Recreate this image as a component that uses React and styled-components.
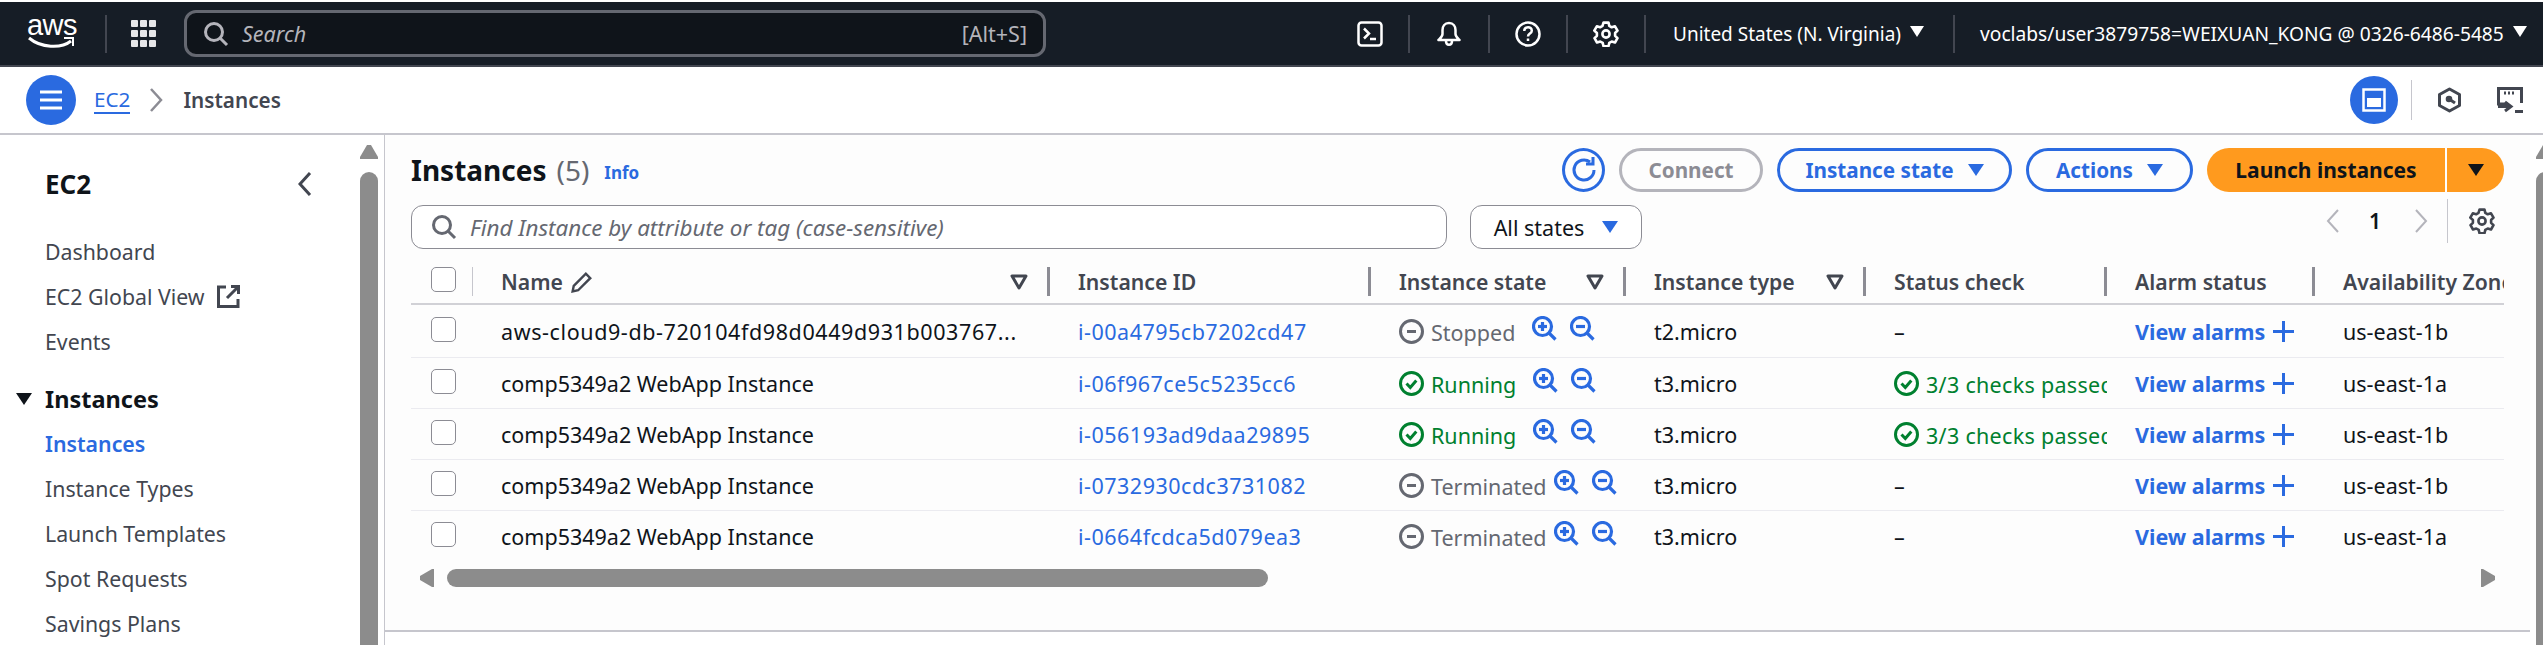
import React from 'react';
import styled, { createGlobalStyle } from 'styled-components';

const BLUE = '#2a6ae0';
const DARK = '#0f141a';
const GREY = '#424650';
const MUTED = '#656871';
const GREEN = '#00802f';
const ORANGE = '#ff9a1e';
const FONT = '"Noto Sans", "Open Sans", Arial, sans-serif';

const GlobalStyle = createGlobalStyle`
    html, body {
        margin: 0;
        padding: 0;
        height: 100%;
        overflow: hidden;
        background: #ffffff;
    }
    body {
        font-family: ${FONT};
        font-size: 21.5px;
        color: ${DARK};
    }
    * {
        box-sizing: border-box;
    }
    svg {
        flex: none;
    }
`;

const Page = styled.div`
    width: 2543px;
    height: 645px;
    overflow: hidden;
    display: flex;
    flex-direction: column;
    padding-top: 2px;
    background: #ffffff;
`;

const TopBar = styled.header`
    height: 65px;
    flex: none;
    display: flex;
    align-items: center;
    background: #161d26;
    border-bottom: 2px solid #424650;
    color: #ffffff;
`;

const LogoBox = styled.div`
    width: 50px;
    margin-left: 27px;
    display: flex;
    flex-direction: column;
    align-items: center;
    color: #ffffff;
`;

const LogoText = styled.span`
    font-family: "Liberation Sans", Arial, sans-serif;
    font-size: 29px;
    line-height: 22px;
    letter-spacing: -0.5px;
    margin-top: -4px;
`;

const TopSep = styled.div`
    width: 2px;
    height: 38px;
    flex: none;
    background: #424650;
    margin-left: ${(p) => p.$left || 0}px;
`;

const GridDots = styled.div`
    display: grid;
    grid-template-columns: repeat(3, 7px);
    grid-auto-rows: 7px;
    gap: 3px 2px;
    margin-left: 24px;
    margin-right: 28px;

    span {
        background: #e6e6e8;
        border-radius: 1px;
    }
`;

const SearchBox = styled.div`
    width: 862px;
    height: 47px;
    flex: none;
    display: flex;
    align-items: center;
    background: #0f141a;
    border: 3px solid #656871;
    border-radius: 12px;
    padding: 0 16px 0 16px;
    color: #b4b4bb;
`;

const SearchHint = styled.span`
    font-style: italic;
    font-size: 21.5px;
    margin-left: 13px;
    flex: 1;
`;

const KeyHint = styled.span`
    font-size: 21.5px;
`;

const TopIcon = styled.div`
    width: ${(p) => p.$width}px;
    flex: none;
    margin-left: ${(p) => p.$left || 0}px;
    margin-right: ${(p) => p.$right || 0}px;
    display: flex;
    justify-content: center;
    color: #ffffff;
`;

const TopText = styled.span`
    font-size: ${(p) => p.$size}px;
    white-space: nowrap;
    margin-left: ${(p) => p.$left}px;
`;

const TopCaret = styled.span`
    width: 0;
    height: 0;
    border-left: 7px solid transparent;
    border-right: 7px solid transparent;
    border-top: 11px solid #ffffff;
    margin-left: ${(p) => p.$left}px;
    margin-bottom: 4px;
`;

const SubBar = styled.div`
    height: 68px;
    flex: none;
    display: flex;
    align-items: center;
    padding-left: 26px;
    border-bottom: 2px solid #c6c6cd;
    background: #ffffff;
`;

const RoundButton = styled.div`
    width: ${(p) => p.$size}px;
    height: ${(p) => p.$size}px;
    border-radius: 50%;
    flex: none;
    background: ${BLUE};
    color: #ffffff;
    display: flex;
    align-items: center;
    justify-content: center;
`;

const Crumb = styled.a`
    margin-left: 18px;
    font-size: 20.7px;
    line-height: 26px;
    color: ${BLUE};
    border-bottom: 2px solid ${BLUE};
`;

const CrumbArrow = styled.svg`
    margin-left: 19px;
`;

const CrumbCurrent = styled.span`
    margin-left: 20px;
    font-size: 20.7px;
    font-weight: 600;
    color: ${GREY};
`;

const SubRight = styled.div`
    margin-left: auto;
    display: flex;
    align-items: center;
    gap: 35px;
    padding-right: 20px;
    color: ${GREY};
`;

const SubLeftGroup = styled.div`
    display: flex;
    align-items: center;
`;

const SubSep = styled.div`
    width: 1px;
    height: 40px;
    background: #c6c6cd;
    margin: 0 25px 0 13px;
`;

const Body = styled.div`
    flex: 1;
    min-height: 0;
    display: flex;
`;

const Sidebar = styled.aside`
    width: 385px;
    flex: none;
    display: flex;
    border-right: 1px solid #c6c6cd;
    background: #ffffff;
`;

const SideNav = styled.nav`
    flex: 1;
    padding-top: 28px;
    padding-left: 45px;
    padding-right: 48px;
`;

const SideHead = styled.div`
    display: flex;
    align-items: center;
    justify-content: space-between;
    height: 42px;
    margin-bottom: 24px;
    font-size: 26px;
    font-weight: 700;
`;

const SideLink = styled.div`
    height: 45px;
    display: flex;
    align-items: center;
    gap: 12px;
    font-size: 21.3px;
    color: ${(p) => (p.$active ? BLUE : GREY)};
    font-weight: ${(p) => (p.$active ? 600 : 400)};
    white-space: nowrap;
`;

const SideGroup = styled.div`
    height: 45px;
    margin-top: 12px;
    margin-left: -29px;
    display: flex;
    align-items: center;
    gap: 13px;
    font-size: 23.5px;
    font-weight: 700;
`;

const GroupCaret = styled.span`
    width: 0;
    height: 0;
    border-left: 8px solid transparent;
    border-right: 8px solid transparent;
    border-top: 12px solid ${DARK};
`;

const VScroll = styled.div`
    width: 18px;
    flex: none;
    margin-left: ${(p) => p.$left || 0}px;
    margin-right: ${(p) => p.$right || 0}px;
    padding-top: 10px;
    display: flex;
    flex-direction: column;
    gap: 13px;
    overflow: hidden;
`;

const VThumb = styled.div`
    flex: 1;
    background: #8c8c8c;
    border-radius: 9px 9px 0 0;
`;

const Main = styled.main`
    flex: 1;
    min-width: 0;
    display: flex;
    align-items: stretch;
`;

const Panel = styled.section`
    width: 2145px;
    height: 497px;
    flex: none;
    padding: 13px 26px 0 26px;
    border-bottom: 2px solid #c6c6cd;
    background: #fdfdfd;
`;

const TitleRow = styled.div`
    height: 44px;
    display: flex;
    align-items: center;
`;

const Title = styled.h1`
    margin: 0;
    font-size: 28px;
    font-weight: 700;
    color: ${DARK};
`;

const Count = styled.span`
    margin-left: 10px;
    font-size: 28px;
    color: ${MUTED};
`;

const InfoLink = styled.a`
    margin-left: 15px;
    margin-top: 4px;
    font-size: 17px;
    font-weight: 700;
    color: ${BLUE};
`;

const Actions = styled.div`
    margin-left: auto;
    display: flex;
    align-items: center;
    gap: 14px;
`;

const RefreshButton = styled.div`
    width: 43px;
    height: 44px;
    border: 3px solid ${BLUE};
    border-radius: 50%;
    color: ${BLUE};
    display: flex;
    align-items: center;
    justify-content: center;
`;

const ActionButton = styled.div`
    width: ${(p) => p.$width}px;
    height: 44px;
    border: 3px solid ${(p) => (p.$disabled ? '#b4b4bb' : BLUE)};
    border-radius: 22px;
    display: flex;
    align-items: center;
    justify-content: center;
    gap: 14px;
    font-size: 20.7px;
    font-weight: 700;
    color: ${(p) => (p.$disabled ? '#8c8c94' : BLUE)};
`;

const BlueCaret = styled.span`
    width: 0;
    height: 0;
    border-left: 8px solid transparent;
    border-right: 8px solid transparent;
    border-top: 12px solid ${BLUE};
`;

const SplitButton = styled.div`
    display: flex;
    height: 44px;
    gap: 2px;
    font-size: 21px;
    font-weight: 700;
    color: ${DARK};
`;

const LaunchMain = styled.div`
    width: 238px;
    background: ${ORANGE};
    border-radius: 22px 0 0 22px;
    display: flex;
    align-items: center;
    justify-content: center;
`;

const LaunchCaret = styled.div`
    width: 57px;
    background: ${ORANGE};
    border-radius: 0 22px 22px 0;
    display: flex;
    align-items: center;
    justify-content: center;

    span {
        width: 0;
        height: 0;
        border-left: 8px solid transparent;
        border-right: 8px solid transparent;
        border-top: 12px solid ${DARK};
    }
`;

const FilterRow = styled.div`
    display: flex;
    align-items: flex-start;
    margin-top: 13px;
    height: 62px;
`;

const FilterInput = styled.div`
    width: 1036px;
    height: 44px;
    display: flex;
    align-items: center;
    gap: 13px;
    padding-left: 19px;
    background: #ffffff;
    border: 1.5px solid #8c8c94;
    border-radius: 12px;
    font-size: 22.4px;
    font-style: italic;
    color: ${MUTED};
`;

const StateSelect = styled.div`
    margin-left: 23px;
    width: 172px;
    height: 44px;
    display: flex;
    align-items: center;
    justify-content: center;
    gap: 18px;
    background: #ffffff;
    border: 1.5px solid #8c8c94;
    border-radius: 12px;
    font-size: 21.5px;
    color: ${DARK};
`;

const Pager = styled.div`
    margin-left: auto;
    margin-top: -6px;
    margin-right: 9px;
    height: 44px;
    display: flex;
    align-items: center;
    font-size: 21px;
    font-weight: 600;
`;

const PagerNum = styled.span`
    margin: 0 33px 0 29px;
`;

const PagerSep = styled.div`
    width: 1px;
    height: 44px;
    background: #c6c6cd;
    margin: 0 21px 0 19px;
`;

const Table = styled.div`
    overflow: hidden;
`;

const COLUMNS = '62px 577px 321px 255px 240px 241px 208px 189px';

const HeadRow = styled.div`
    display: grid;
    grid-template-columns: ${COLUMNS};
    height: 38px;
    align-items: start;
    border-bottom: 2px solid #d1d1d6;
`;

const Row = styled.div`
    display: grid;
    grid-template-columns: ${COLUMNS};
    height: ${(p) => p.$height || 51}px;
    align-items: center;
    border-bottom: ${(p) => (p.$last ? 'none' : '1.5px solid #ebebf0')};
    font-size: 21.5px;
`;

const CheckCell = styled.div`
    height: ${(p) => (p.$head ? '29px' : 'auto')};
    padding-left: 20px;
    border-right: ${(p) => (p.$head ? '1.5px solid #c6c6cd' : 'none')};
    margin-bottom: ${(p) => (p.$head ? 0 : '4px')};
`;

const CheckBox = styled.div`
    width: 25px;
    height: 25px;
    background: #ffffff;
    border: 1.5px solid #8c8c94;
    border-radius: 5px;
`;

const HeadCell = styled.div`
    height: 29px;
    display: flex;
    align-items: center;
    gap: 8px;
    padding-left: 28px;
    padding-right: 19px;
    font-size: 21.2px;
    font-weight: 600;
    color: ${GREY};
    white-space: nowrap;
    overflow: hidden;
    border-right: ${(p) => (p.$last ? 'none' : '3px solid #8c8c94')};
`;

const FilterMark = styled.span`
    margin-left: auto;
    display: flex;
`;

const Cell = styled.div`
    padding-left: 28px;
    white-space: nowrap;
    overflow: hidden;
    color: ${DARK};
    display: flex;
    align-items: center;
    letter-spacing: ${(p) => p.$spacing || 0}px;
`;

const CellLink = styled.a`
    color: ${BLUE};
    letter-spacing: 0.5px;
`;

const StateCell = styled(Cell)`
    gap: 7px;
`;

const StateText = styled.span`
    flex: none;
    color: ${(p) => (p.$ok ? GREEN : MUTED)};
    margin-top: 2px;
`;

const ZoomIcons = styled.span`
    display: flex;
    gap: 13px;
    margin-left: ${(p) => p.$left}px;
    margin-bottom: 6px;
    color: ${BLUE};
`;

const AlarmLink = styled.a`
    display: flex;
    align-items: center;
    gap: 8px;
    color: ${BLUE};
    font-weight: 700;
`;

const HScroll = styled.div`
    height: 18px;
    margin-top: 7px;
    display: flex;
    align-items: center;
    padding: 0 9px;
    color: #8c8c8c;
`;

const HThumb = styled.div`
    width: 821px;
    height: 18px;
    margin-left: 13px;
    margin-right: auto;
    background: #8c8c8c;
    border-radius: 9px;
`;

const Tri = ({ dir }) => (
    <svg width="14" height="18" viewBox="0 0 14 18" fill="currentColor">
        <path d={dir === 'left' ? 'M14 0v18h-2L0 11V7l12-7z' : 'M0 0v18h2l12-7V7L2 0z'} />
    </svg>
);

const FilterCaret = () => (
    <FilterMark>
        <svg width="18" height="16" viewBox="0 0 18 16" fill="none" stroke={GREY} strokeWidth="3" strokeLinejoin="round">
            <path d="M2 2h14L9 14z" />
        </svg>
    </FilterMark>
);

const SearchIcon = ({ size = 26, color = 'currentColor' }) => (
    <svg width={size} height={size} viewBox="0 0 26 26" fill="none" stroke={color} strokeWidth="3">
        <circle cx="11" cy="11" r="8.5" />
        <path d="M17 17l7 7" />
    </svg>
);

const Chevron = ({ dir, color, width = 14, height = 24, stroke = 2 }) => (
    <svg width={width} height={height} viewBox="0 0 14 24" fill="none" stroke={color} strokeWidth={stroke}>
        <path d={dir === 'left' ? 'M12 1L2 12l10 11' : 'M2 1l10 11L2 23'} />
    </svg>
);

const GearIcon = ({ color = 'currentColor', size = 26 }) => (
    <svg width={size} height={size} viewBox="0 0 26 26" fill="none" stroke={color} strokeWidth="2.6" strokeLinejoin="round">
        <circle cx="13" cy="13" r="3.6" />
        <path d="M10.5 1.6h5l.8 3.3 2.4 1.4 3.3-1 2.5 4.3-2.4 2.4v2.8l2.4 2.4-2.5 4.3-3.3-1-2.4 1.4-.8 3.3h-5l-.8-3.3-2.4-1.4-3.3 1-2.5-4.3 2.4-2.4v-2.8L1.3 9.6l2.5-4.3 3.3 1 2.4-1.400z" />
    </svg>
);

const StoppedIcon = () => (
    <svg width="25" height="25" viewBox="0 0 25 25" fill="none" stroke={MUTED} strokeWidth="3">
        <circle cx="12.5" cy="12.5" r="11" />
        <path d="M8 12.5h9" />
    </svg>
);

const OkIcon = () => (
    <svg width="25" height="25" viewBox="0 0 25 25" fill="none" stroke={GREEN} strokeWidth="3">
        <circle cx="12.5" cy="12.5" r="11" />
        <path d="M7.5 12.5l3.8 4 6-7" />
    </svg>
);

const ZoomIcon = ({ plus }) => (
    <svg width="25" height="25" viewBox="0 0 25 25" fill="none" stroke={BLUE} strokeWidth="3.2">
        <circle cx="10.5" cy="10.5" r="9" />
        <path d="M16.5 16.5l7 7" />
        <path d="M6 10.5h9" />
        {plus && <path d="M10.5 6v9" />}
    </svg>
);

const PlusIcon = () => (
    <svg width="21" height="21" viewBox="0 0 21 21" fill="none" stroke={BLUE} strokeWidth="3">
        <path d="M10.5 0v21M0 10.5h21" />
    </svg>
);

const rows = [
    { name: 'aws-cloud9-db-720104fd98d0449d931b003767...', spacing: 0.6, id: 'i-00a4795cb7202cd47', state: 'Stopped', type: 't2.micro', zone: 'us-east-1b' },
    { name: 'comp5349a2 WebApp Instance', id: 'i-06f967ce5c5235cc6', state: 'Running', type: 't3.micro', zone: 'us-east-1a' },
    { name: 'comp5349a2 WebApp Instance', id: 'i-056193ad9daa29895', state: 'Running', type: 't3.micro', zone: 'us-east-1b' },
    { name: 'comp5349a2 WebApp Instance', id: 'i-0732930cdc3731082', state: 'Terminated', type: 't3.micro', zone: 'us-east-1b' },
    { name: 'comp5349a2 WebApp Instance', id: 'i-0664fcdca5d079ea3', state: 'Terminated', type: 't3.micro', zone: 'us-east-1a' },
];

const zoomGap = { Stopped: 10, Running: 10, Terminated: 0 };

const App = () => {
    return (
        <Page>
            <GlobalStyle />
            <TopBar>
                <LogoBox>
                    <LogoText>aws</LogoText>
                    <svg width="50" height="13" viewBox="0 0 50 13" fill="none">
                        <path d="M2 2c12 10 32 11 42 3" stroke="#ffffff" strokeWidth="3" />
                        <path d="M37 2h9v8" stroke="#ffffff" strokeWidth="2" />
                    </svg>
                </LogoBox>
                <TopSep $left={28} />
                <GridDots>
                    {Array.from({ length: 9 }).map((_, i) => <span key={i} />)}
                </GridDots>
                <SearchBox>
                    <SearchIcon />
                    <SearchHint>Search</SearchHint>
                    <KeyHint>[Alt+S]</KeyHint>
                </SearchBox>
                <TopIcon $width={26} $left={311} $right={25}>
                    <svg width="26" height="26" viewBox="0 0 26 26" fill="none" stroke="#ffffff" strokeWidth="2.5">
                        <rect x="1.5" y="1.5" width="23" height="23" rx="3" />
                        <path d="M7 7.5l5 5-5 5M13 18h6" />
                    </svg>
                </TopIcon>
                <TopSep />
                <TopIcon $width={78}>
                    <svg width="24" height="26" viewBox="0 0 24 26" fill="none" stroke="#ffffff" strokeWidth="2.5" strokeLinejoin="round">
                        <path d="M12 2c-4.5 0-6.500 3.500-6.500 7v4c0 2.500-2 4-4 6h21c-2-2-4-3.500-4-6V9c0-3.500-2-7-6.500-7z" />
                        <path d="M9 20c0 5 6 5 6 0" />
                    </svg>
                </TopIcon>
                <TopSep />
                <TopIcon $width={76}>
                    <svg width="26" height="26" viewBox="0 0 26 26" fill="none" stroke="#ffffff" strokeWidth="2.5">
                        <circle cx="13" cy="13" r="11.5" />
                        <path d="M9.3 10c0-5 7.500-5 7.500-.3 0 3-3.800 2.800-3.800 5.800" />
                        <path d="M13 17.5v2.500" />
                    </svg>
                </TopIcon>
                <TopSep />
                <TopIcon $width={76}>
                    <GearIcon />
                </TopIcon>
                <TopSep />
                <TopText $left={27} $size={19}>United States (N. Virginia)</TopText>
                <TopCaret $left={9} />
                <TopSep $left={29} />
                <TopText $left={25} $size={19.2}>voclabs/user3879758=WEIXUAN_KONG @ 0326-6486-5485</TopText>
                <TopCaret $left={9} />
            </TopBar>

            <SubBar>
                <RoundButton $size={50}>
                    <svg width="22" height="20" viewBox="0 0 22 20" fill="none" stroke="#ffffff" strokeWidth="3">
                        <path d="M0 2h22M0 10h22M0 18h22" />
                    </svg>
                </RoundButton>
                <Crumb>EC2</Crumb>
                <CrumbArrow width="14" height="24" viewBox="0 0 14 24" fill="none" stroke="#8c8c94" strokeWidth="2.5">
                    <path d="M2 1l10 11L2 23" />
                </CrumbArrow>
                <CrumbCurrent>Instances</CrumbCurrent>
                <SubRight>
                    <SubLeftGroup>
                        <RoundButton $size={48}>
                            <svg width="24" height="24" viewBox="0 0 24 24" fill="none">
                                <rect x="1.5" y="1.5" width="21" height="21" stroke="#ffffff" strokeWidth="2.5" />
                                <rect x="5" y="10" width="14" height="9" fill="#ffffff" />
                            </svg>
                        </RoundButton>
                        <SubSep />
                        <svg width="25" height="26" viewBox="0 0 25 26" fill="none" stroke={GREY} strokeWidth="3" strokeLinejoin="round">
                            <path d="M12.5 2l10 5.500v11l-10 5.500-10-5.500v-11z" />
                            <path d="M12 12l6 4" />
                            <circle cx="12" cy="12" r="1.8" fill={GREY} />
                        </svg>
                    </SubLeftGroup>
                    <svg width="26" height="26" viewBox="0 0 26 26" fill="none" stroke={GREY} strokeWidth="3">
                        <path d="M11 17H1.5V1.5h23V16" />
                        <path d="M7 6h2M11 6h2M15 6h2" />
                        <path d="M8 15l6 4.500-6 4.500M1 19.500h12" />
                        <path d="M18 24.500h8" />
                    </svg>
                </SubRight>
            </SubBar>

            <Body>
                <Sidebar>
                    <SideNav>
                        <SideHead>
                            EC2
                            <Chevron dir="left" color={GREY} stroke={3} />
                        </SideHead>
                        <SideLink>Dashboard</SideLink>
                        <SideLink>
                            EC2 Global View
                            <svg width="23" height="23" viewBox="0 0 23 23" fill="none" stroke={GREY} strokeWidth="3">
                                <path d="M9 2H1.5v19.500h19.500V14" />
                                <path d="M14 1.5h7.500V9M21 2L10 13" />
                            </svg>
                        </SideLink>
                        <SideLink>Events</SideLink>
                        <SideGroup>
                            <GroupCaret />
                            Instances
                        </SideGroup>
                        <SideLink $active>Instances</SideLink>
                        <SideLink>Instance Types</SideLink>
                        <SideLink>Launch Templates</SideLink>
                        <SideLink>Spot Requests</SideLink>
                        <SideLink>Savings Plans</SideLink>
                    </SideNav>
                    <VScroll $right={6}>
                        <svg width="18" height="14" viewBox="0 0 18 14" fill="#8c8c8c">
                            <path d="M0 14h18v-2L11 0H7L0 12z" />
                        </svg>
                        <VThumb />
                    </VScroll>
                </Sidebar>

                <Main>
                    <Panel>
                        <TitleRow>
                            <Title>Instances</Title>
                            <Count>(5)</Count>
                            <InfoLink>Info</InfoLink>
                            <Actions>
                                <RefreshButton>
                                    <svg width="26" height="28" viewBox="0 0 26 28" fill="none" stroke={BLUE} strokeWidth="3">
                                        <path d="M23 14a10 10 0 1 1-4-8" />
                                        <path d="M22 1v7h-7" />
                                    </svg>
                                </RefreshButton>
                                <ActionButton $width={144} $disabled>Connect</ActionButton>
                                <ActionButton $width={235}>Instance state <BlueCaret /></ActionButton>
                                <ActionButton $width={167}>Actions <BlueCaret /></ActionButton>
                                <SplitButton>
                                    <LaunchMain>Launch instances</LaunchMain>
                                    <LaunchCaret><span /></LaunchCaret>
                                </SplitButton>
                            </Actions>
                        </TitleRow>

                        <FilterRow>
                            <FilterInput>
                                <SearchIcon color={MUTED} />
                                Find Instance by attribute or tag (case-sensitive)
                            </FilterInput>
                            <StateSelect>All states <BlueCaret /></StateSelect>
                            <Pager>
                                <Chevron dir="left" color="#b4b4bb" />
                                <PagerNum>1</PagerNum>
                                <Chevron dir="right" color="#b4b4bb" />
                                <PagerSep />
                                <GearIcon color={GREY} />
                            </Pager>
                        </FilterRow>

                        <Table>
                            <HeadRow>
                                <CheckCell $head><CheckBox /></CheckCell>
                                <HeadCell>
                                    Name
                                    <svg width="22" height="22" viewBox="0 0 20 20" fill="none" stroke={GREY} strokeWidth="2.2">
                                        <path d="M1.5 18.500l1-5L13.500 2.500l4 4L6.500 17.500z" />
                                    </svg>
                                    <FilterCaret />
                                </HeadCell>
                                <HeadCell>Instance ID</HeadCell>
                                <HeadCell>Instance state<FilterCaret /></HeadCell>
                                <HeadCell>Instance type<FilterCaret /></HeadCell>
                                <HeadCell>Status check</HeadCell>
                                <HeadCell>Alarm status</HeadCell>
                                <HeadCell $last>Availability Zone</HeadCell>
                            </HeadRow>
                            {rows.map((r, i) => (
                                <Row key={r.id} $last={i === rows.length - 1} $height={i === 0 ? 53 : 51}>
                                    <CheckCell><CheckBox /></CheckCell>
                                    <Cell $spacing={r.spacing}>{r.name}</Cell>
                                    <Cell><CellLink>{r.id}</CellLink></Cell>
                                    <StateCell>
                                        {r.state === 'Running' ? <OkIcon /> : <StoppedIcon />}
                                        <StateText $ok={r.state === 'Running'}>{r.state}</StateText>
                                        <ZoomIcons $left={zoomGap[r.state]}>
                                            <ZoomIcon plus />
                                            <ZoomIcon />
                                        </ZoomIcons>
                                    </StateCell>
                                    <Cell>{r.type}</Cell>
                                    <StateCell $spacing={0.3}>
                                        {r.state === 'Running' ? (
                                            <>
                                                <OkIcon />
                                                <StateText $ok>3/3 checks passed</StateText>
                                            </>
                                        ) : '–'}
                                    </StateCell>
                                    <Cell>
                                        <AlarmLink>View alarms <PlusIcon /></AlarmLink>
                                    </Cell>
                                    <Cell>{r.zone}</Cell>
                                </Row>
                            ))}
                        </Table>
                        <HScroll>
                            <Tri dir="left" />
                            <HThumb />
                            <Tri dir="right" />
                        </HScroll>
                    </Panel>
                    <VScroll $left={6}>
                        <svg width="18" height="14" viewBox="0 0 18 14" fill="#8c8c8c">
                            <path d="M0 14h18v-2L11 0H7L0 12z" />
                        </svg>
                        <VThumb />
                    </VScroll>
                </Main>
            </Body>
        </Page>
    );
};

export default App;
